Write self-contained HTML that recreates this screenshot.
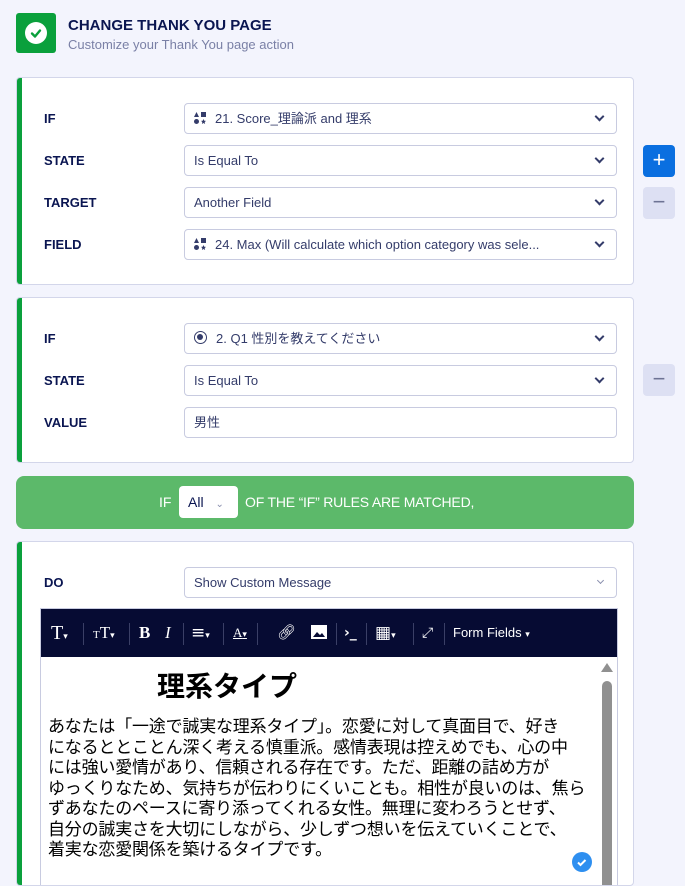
<!DOCTYPE html>
<html><head><meta charset="utf-8"><style>
*{box-sizing:border-box;margin:0;padding:0}
body{width:685px;height:877px;overflow:hidden;background:#f3f4fd;font-family:"Liberation Sans","Noto Sans CJK JP",sans-serif;position:relative;color:#0a1551}
.abs{position:absolute}
.card{position:absolute;left:16px;width:618px;background:#fff;border:1px solid #d3d6ea;border-radius:4px;overflow:hidden}
.card:before{content:"";position:absolute;left:0;top:0;bottom:0;width:5px;background:#0aa03c}
.lbl{position:absolute;left:27px;font-size:13px;font-weight:bold;color:#0a1551}
.sel{position:absolute;left:167px;width:433px;height:31px;border:1px solid #c8cbe0;border-radius:4px;font-size:13px;color:#343c6a;line-height:29px;padding-left:9px;background:#fff}
.sel .ch{position:absolute;right:13px;top:9px;width:7px;height:7px;border-right:2px solid #343c6a;border-bottom:2px solid #343c6a;transform:rotate(45deg)}
.ic{display:inline-block;width:12px;height:12px;vertical-align:-1px;margin-right:9px;position:relative}
.btn{position:absolute;left:643px;width:32px;height:32px;border-radius:4px;text-align:center;line-height:30px;font-size:22px}
.tb{position:absolute;top:0;height:48px;line-height:48px;color:#fff;font-family:"Liberation Serif",serif;font-size:17px}
.sep{position:absolute;top:14px;width:1px;height:22px;background:#3a3f66}
</style></head><body>
<div class="abs" style="left:16px;top:13px;width:40px;height:40px;background:#0aa03c;border-radius:3px"></div>
<div class="abs" style="left:25px;top:22px;width:22px;height:22px;background:#fff;border-radius:50%"></div>
<svg class="abs" style="left:25px;top:22px" width="22" height="22"><path d="M7 11.5l3 3 5-6" stroke="#0aa03c" stroke-width="2.4" fill="none" stroke-linecap="round" stroke-linejoin="round"/></svg>
<div class="abs" style="left:68px;top:17px;font-size:15px;font-weight:bold;color:#0a1551">CHANGE THANK YOU PAGE</div>
<div class="abs" style="left:68px;top:37px;font-size:13px;color:#7a80a6">Customize your Thank You page action</div>

<div class="card" style="top:77px;height:208px">
<div class="lbl" style="top:33px">IF</div><div class="sel" style="top:25px"><span class="ic"><svg width="12" height="12"><path d="M0 5L2.5 0 5 5z" fill="#343c6a"/><rect x="7" y="0" width="5" height="5" fill="#343c6a"/><circle cx="2.5" cy="9.5" r="2.5" fill="#343c6a"/><path d="M9.5 7l.8 1.7 1.7.2-1.3 1.2.4 1.9-1.6-1-1.6 1 .4-1.9-1.3-1.2 1.7-.2z" fill="#343c6a"/></svg></span>21. Score_理論派 and 理系<i class="ch"></i></div>
<div class="lbl" style="top:75px">STATE</div><div class="sel" style="top:67px">Is Equal To<i class="ch"></i></div>
<div class="lbl" style="top:117px">TARGET</div><div class="sel" style="top:109px">Another Field<i class="ch"></i></div>
<div class="lbl" style="top:159px">FIELD</div><div class="sel" style="top:151px"><span class="ic"><svg width="12" height="12"><path d="M0 5L2.5 0 5 5z" fill="#343c6a"/><rect x="7" y="0" width="5" height="5" fill="#343c6a"/><circle cx="2.5" cy="9.5" r="2.5" fill="#343c6a"/><path d="M9.5 7l.8 1.7 1.7.2-1.3 1.2.4 1.9-1.6-1-1.6 1 .4-1.9-1.3-1.2 1.7-.2z" fill="#343c6a"/></svg></span>24. Max (Will calculate which option category was sele...<i class="ch"></i></div>
</div>
<div class="btn" style="top:145px;background:#0a6fe0;color:#fff">+</div>
<div class="btn" style="top:187px;background:#dde0f3;color:#6d7394">−</div>

<div class="card" style="top:297px;height:166px">
<div class="lbl" style="top:33px">IF</div><div class="sel" style="top:25px"><span class="ic" style="width:13px;height:13px;border:1.5px solid #343c6a;border-radius:50%"><span style="position:absolute;left:2px;top:2px;width:6px;height:6px;border-radius:50%;background:#343c6a"></span></span>2. Q1 性別を教えてください<i class="ch"></i></div>
<div class="lbl" style="top:75px">STATE</div><div class="sel" style="top:67px">Is Equal To<i class="ch"></i></div>
<div class="lbl" style="top:117px">VALUE</div><div class="sel" style="top:109px">男性</div>
</div>
<div class="btn" style="top:364px;background:#dde0f3;color:#6d7394">−</div>

<div class="abs" style="left:16px;top:476px;width:618px;height:53px;background:#5cb96a;border-radius:8px;color:#fff;font-size:14px;line-height:53px;font-weight:bold">
<span class="abs" style="left:143px;font-weight:normal">IF</span>
<span class="abs" style="left:163px;top:10px;width:59px;height:32px;background:#fff;border-radius:4px;color:#0a1551;line-height:32px;padding-left:9px;font-weight:normal">All <span style="color:#8a8fae;font-size:10px;margin-left:8px">⌄</span></span>
<span class="abs" style="left:229px;font-weight:normal;letter-spacing:-0.2px">OF THE “IF” RULES ARE MATCHED,</span>
</div>

<div class="card" style="top:541px;height:345px">
<div class="lbl" style="top:33px">DO</div><div class="sel" style="top:25px">Show Custom Message<i class="ch" style="border-color:#8a8fae;width:5px;height:5px;top:10px;border-width:1.5px"></i></div>
<div class="abs" style="left:23px;top:66px;width:578px;height:290px;border:1px solid #c8cbe0;background:#fff">
<div class="abs" style="left:0;top:0;width:576px;height:48px;background:#060b33">
<span class="tb" style="left:10px;font-size:20px">T<small style="font-size:9px">▾</small></span><div class="sep" style="left:42px"></div>
<span class="tb" style="left:52px"><small style="font-size:11px">T</small>T<small style="font-size:9px">▾</small></span><div class="sep" style="left:88px"></div>
<span class="tb" style="left:98px;font-weight:bold">B</span><span class="tb" style="left:124px;font-style:italic">I</span><div class="sep" style="left:142px"></div>
<span class="tb" style="left:150px;font-family:'DejaVu Sans'">≡<small style="font-size:9px">▾</small></span><div class="sep" style="left:182px"></div>
<span class="tb" style="left:192px;font-size:13px;text-decoration:underline">A<small style="font-size:9px">▾</small></span><div class="sep" style="left:216px"></div>
<span class="tb" style="left:236px;font-size:15px">🔗︎</span>
<svg class="abs" style="left:270px;top:16px" width="16" height="14"><rect width="16" height="14" fill="#fff"/><path d="M2 12l4-5 3 3 2-2 3 4z" fill="#060b33"/></svg><div class="sep" style="left:295px"></div>
<span class="tb" style="left:303px;font-family:'DejaVu Sans';font-size:14px;font-weight:bold">›_</span><div class="sep" style="left:325px"></div>
<span class="tb" style="left:334px;font-family:'DejaVu Sans'">▦<small style="font-size:9px">▾</small></span><div class="sep" style="left:372px"></div>
<span class="tb" style="left:381px;font-family:'DejaVu Sans';font-size:14px">⤢</span><div class="sep" style="left:403px"></div>
<span class="tb" style="left:412px;font-family:'Liberation Sans';font-size:13px">Form Fields <small style="font-size:9px">▾</small></span>
</div>
<div class="abs" style="left:116px;top:56px;font-size:28px;font-weight:bold;color:#000;font-family:'Noto Sans CJK JP',sans-serif;line-height:40px">理系タイプ</div>
<div class="abs" style="left:7px;top:106px;width:545px;font-size:17px;line-height:20.5px;color:#000;font-family:'WenQuanYi Zen Hei','Noto Sans CJK JP',sans-serif;white-space:nowrap;letter-spacing:-0.2px">あなたは「一途で誠実な理系タイプ」。恋愛に対して真面目で、好き<br>になるととことん深く考える慎重派。感情表現は控えめでも、心の中<br>には強い愛情があり、信頼される存在です。ただ、距離の詰め方が<br>ゆっくりなため、気持ちが伝わりにくいことも。相性が良いのは、焦ら<br>ずあなたのペースに寄り添ってくれる女性。無理に変わろうとせず、<br>自分の誠実さを大切にしながら、少しずつ想いを伝えていくことで、<br>着実な恋愛関係を築けるタイプです。</div>
<div class="abs" style="left:560px;top:54px;width:0;height:0;border-left:6px solid transparent;border-right:6px solid transparent;border-bottom:9px solid #909090"></div>
<div class="abs" style="left:561px;top:72px;width:10px;height:220px;background:#909090;border-radius:5px"></div>
<div class="abs" style="left:531px;top:243px;width:20px;height:20px;border-radius:50%;background:#2e8ff0"></div>
<svg class="abs" style="left:531px;top:243px" width="20" height="20"><path d="M6 10.5l2.5 2.5 5-5" stroke="#fff" stroke-width="2" fill="none"/></svg>
</div>
</div>
</body></html>
